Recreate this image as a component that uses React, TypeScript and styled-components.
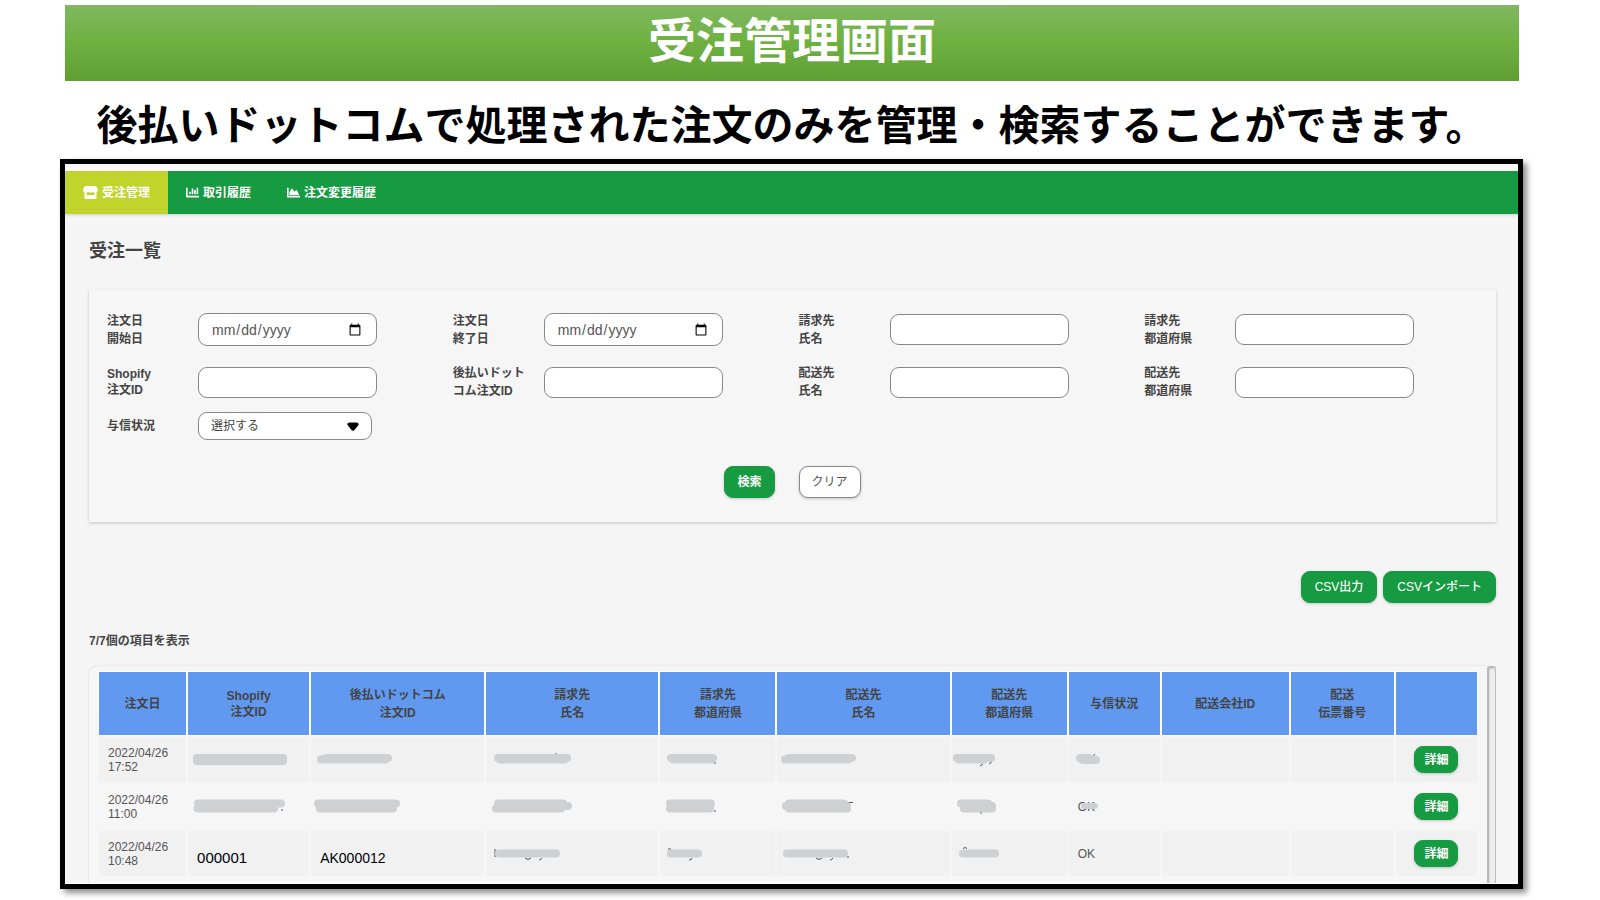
import React from 'react';
import styled, { createGlobalStyle } from 'styled-components';
import { FaChartBar, FaChartArea } from 'react-icons/fa';

const GlobalStyle = createGlobalStyle`
  *, *::before, *::after { box-sizing: border-box; }
  body {
    margin: 0;
    background: #fff;
    color: #444;
    font: 12px/18px "Liberation Sans", "Noto Sans CJK JP", sans-serif;
  }
  button, input, select { font: inherit; color: inherit; }
`;

const Page = styled.div`
  padding: 5px 77px 10px 60px;
`;

const Banner = styled.h1`
  margin: 0 4px 0 5px;
  height: 76px;
  padding-bottom: 2px;
  display: flex;
  align-items: center;
  justify-content: center;
  background: linear-gradient(#81b861 0%, #6fb242 45%, #5f9f33 100%);
  color: #fff;
  font-size: 48px;
  line-height: 72px;
  font-weight: 700;
`;

const Lead = styled.p`
  margin: 0;
  padding: 15px 0 3px;
  text-align: center;
  white-space: nowrap;
  color: #000;
  font-size: 41px;
  line-height: 60px;
  font-weight: 700;
`;

const Frame = styled.main`
  border: 5px solid #000;
  background: #f5f5f5;
  box-shadow: 4px 4px 6px rgba(0, 0, 0, 0.45);
`;

const Nav = styled.nav`
  display: flex;
  height: 50px;
  border-top: 7px solid #faf8f9;
  background: #179b42;
  box-shadow: 0 1px 3px rgba(0, 0, 0, 0.15);
`;

const Tab = styled.a<{ $active?: boolean }>`
  display: flex;
  align-items: center;
  gap: 4px;
  padding: 0 18px;
  color: #fff;
  font-weight: 700;
  text-decoration: none;
  background: ${(p) => (p.$active ? '#c1d42c' : 'transparent')};
`;

const Content = styled.div`
  padding: 0 22px 0 24px;
  border-bottom: 1px solid #fff;
`;

const Heading = styled.h2`
  margin: 0;
  padding: 25px 0 26px;
  font-size: 18px;
  line-height: 25px;
  font-weight: 700;
`;

const SearchCard = styled.form`
  padding: 13px 6px 24px 18px;
  background: #f6f6f6;
  box-shadow: 0 1px 3px rgba(0, 0, 0, 0.2);
`;

const Fields = styled.div`
  display: grid;
  grid-template-columns: repeat(4, 1fr);
  grid-template-rows: 53px 52px 36px;
`;

const Field = styled.div`
  display: flex;
  align-items: center;
`;

const Label = styled.label<{ $tight?: boolean }>`
  flex: 0 0 91px;
  font-weight: 700;
  line-height: ${(p) => (p.$tight ? 16 : 18)}px;
  white-space: pre-line;
`;

const TextInput = styled.input`
  width: 179px;
  height: 31px;
  padding: 0 12px;
  border: 1px solid #888;
  border-radius: 9px;
  background: #fff;
  font-size: 14px;
`;

const DateInput = styled(TextInput)`
  height: 33px;
  color: #555;
`;

const SelectBox = styled.div`
  position: relative;
  width: 174px;

  svg {
    position: absolute;
    top: 10px;
    right: 13px;
    pointer-events: none;
  }
`;

const Select = styled.select`
  display: block;
  width: 100%;
  height: 28px;
  padding: 0 12px;
  border: 1px solid #888;
  border-radius: 9px;
  background: #fff;
  appearance: none;
`;

const Actions = styled.div`
  display: flex;
  justify-content: center;
  gap: 24px;
  padding: 22px 12px 0 0;
`;

const Button = styled.button<{ $plain?: boolean; $small?: boolean }>`
  height: ${(p) => (p.$small ? 27 : 32)}px;
  padding: 0 ${(p) => (p.$small ? 9 : 12)}px;
  border: 1px solid ${(p) => (p.$plain ? '#888' : '#179b42')};
  border-radius: 9px;
  background: ${(p) => (p.$plain ? '#fff' : '#179b42')};
  color: ${(p) => (p.$plain ? '#555' : '#fff')};
  font-weight: ${(p) => (p.$plain ? 400 : 700)};
  box-shadow: 0 1px 3px rgba(0, 0, 0, 0.2);
  white-space: nowrap;
`;

const ExportButton = styled(Button)`
  padding: 0 13px;
  font-weight: 500;
`;

const Exports = styled.div`
  display: flex;
  justify-content: flex-end;
  gap: 6px;
  padding-top: 49px;
`;

const Count = styled.p`
  margin: 0;
  padding: 29px 0 16px;
  font-weight: 700;
`;

const TableArea = styled.div`
  display: flex;
`;

const TablePanel = styled.div`
  flex: 1;
  min-width: 0;
  padding: 4px 8px 5px;
  border-radius: 9px 0 0 0;
  background: #f6f6f6;
  box-shadow: 0 0 2px rgba(0, 0, 0, 0.18);
  clip-path: inset(-3px 0 0 -3px);
`;

const ScrollTrack = styled.div`
  flex: 0 0 9px;
  border: 1px solid #bbb;
  border-bottom: 0;
  border-radius: 3px 3px 0 0;
  background: #eee;
  box-shadow: inset 1px 1px 2px rgba(0, 0, 0, 0.3);
`;

const Table = styled.table`
  width: 100%;
  table-layout: fixed;
  border-collapse: separate;
  border-spacing: 2px;
`;

const HeadCell = styled.th<{ $tight?: boolean }>`
  height: 63px;
  padding: 0;
  background: #6099ef;
  box-shadow: 0 0 0 1px #fff;
  font-weight: 700;
  line-height: ${(p) => (p.$tight ? 16 : 18)}px;
  white-space: pre-line;
`;

const Row = styled.tr`
  &:nth-child(odd) td { background: #f1f1f1; }
`;

const Cell = styled.td<{ $button?: boolean }>`
  position: relative;
  height: 45px;
  padding: 0 9px;
  line-height: 14px;
  color: #555;
  white-space: pre-line;
  text-align: ${(p) => (p.$button ? 'center' : 'left')};
`;

const Entry = styled.span<{ $size: number }>`
  display: block;
  padding-top: 8px;
  color: #000;
  font-size: ${(p) => p.$size}px;
`;

const MaskSvg = styled.svg`
  position: absolute;
  left: 0;
  top: 10px;
  overflow: visible;
`;

type MaskShape = { bars: string; marks?: string; thick?: number };

const Mask = ({ bars, marks, thick = 8 }: MaskShape) => (
  <MaskSvg width="100" height="24" fill="none" aria-hidden="true">
    {marks && <path d={marks} stroke="#555" strokeWidth="1" />}
    <path d={bars} stroke="#cfd0d2" strokeWidth={thick} strokeLinecap="round" />
  </MaskSvg>
);

const StoreIcon = () => (
  <svg width="15" height="13" viewBox="0 0 15 13" fill="#fff" aria-hidden="true">
    <path d="M2.500 0H12.500Q13 0 13.300 0.500L14.700 3Q15.400 5.400 13.500 6V12Q13.500 13 12.500 13H2.500Q1.500 13 1.500 12V6Q-0.400 5.400 0.300 3L1.700 0.500Q2 0 2.500 0ZM3.500 6.600V9H11.500V6.600Q10.300 6.500 9.800 5.900Q7.500 7.200 5.200 5.900Q4.700 6.500 3.500 6.600Z" fillRule="evenodd" />
  </svg>
);

const columns: { label: string; width: number; tight?: boolean }[] = [
  { label: '注文日', width: 87 },
  { label: 'Shopify\n注文ID', width: 121, tight: true },
  { label: '後払いドットコム\n注文ID', width: 173 },
  { label: '請求先\n氏名', width: 172 },
  { label: '請求先\n都道府県', width: 115 },
  { label: '配送先\n氏名', width: 172 },
  { label: '配送先\n都道府県', width: 115 },
  { label: '与信状況', width: 91 },
  { label: '配送会社ID', width: 127 },
  { label: '配送\n伝票番号', width: 103 },
  { label: '', width: 81 },
];

type CellData = { text?: string; entry?: number; mask?: MaskShape };

const rows: { date: string; cells: CellData[] }[] = [
  {
    date: '2022/04/26\n17:52',
    cells: [
      { mask: { bars: 'M9 11H95M9 14H95' } },
      { mask: { bars: 'M15 11H77M10 12.5H74', marks: 'M74 16L78 13' } },
      { mask: { bars: 'M12 11H81M14 12.5H78', marks: 'M70 6V8' } },
      { mask: { bars: 'M11 11H53M13 12.5H52', marks: 'M54 16H56' } },
      { mask: { bars: 'M12 11H75M8 12.5H71' } },
      { mask: { bars: 'M5 11H39M7 12.5H32', marks: 'M28 19L31 17M37 17Q40 16 40 13' } },
      { mask: { bars: 'M11 11H20M13 12.5H26M14 13H27', marks: 'M22 11L26 7' } },
    ],
  },
  {
    date: '2022/04/26\n11:00',
    cells: [
      { mask: { bars: 'M10 9.5H93M9.5 14.5H86', marks: 'M93 16H95' } },
      { mask: { bars: 'M7 9.5H85M9 14.5H82' } },
      { mask: { bars: 'M12 9.5H77M40 12H82M10 14.5H75' } },
      { mask: { bars: 'M10 9.5H51M10 14.5H50', marks: 'M54 17H56' } },
      { mask: { bars: 'M12 9.5H67M9 12H70M12 14.5H70', marks: 'M70 8.500H76' } },
      { mask: { bars: 'M9 9.5H36M12 12H40M12 14.5H40', marks: 'M29 18V20' } },
      { text: 'OK', mask: { bars: 'M15 12H26', thick: 6 } },
    ],
  },
  {
    date: '2022/04/26\n10:48',
    cells: [
      { text: '000001', entry: 15 },
      { text: 'AK000012', entry: 14 },
      { mask: { bars: 'M13 12.5H70', marks: 'M9 8V16M39 17Q42 20 45 17M53 19Q55 19 56 17' } },
      { mask: { bars: 'M11 12.5H38', marks: 'M29 19Q32 19 32 17M8 8H11' } },
      { mask: { bars: 'M10 12.5H67', marks: 'M39 17Q42 20 45 17M53 19Q55 19 56 17M70 16H72' } },
      { mask: { bars: 'M11 12.5H43', marks: 'M11 7.500Q13 5.500 15 7.500' } },
      { text: 'OK' },
    ],
  },
];

type FieldData = { id: string; label: string; date?: boolean; tight?: boolean };

const fields: FieldData[] = [
  { id: 'from', label: '注文日\n開始日', date: true },
  { id: 'to', label: '注文日\n終了日', date: true },
  { id: 'bill-name', label: '請求先\n氏名' },
  { id: 'bill-pref', label: '請求先\n都道府県' },
  { id: 'shopify-id', label: 'Shopify\n注文ID', tight: true },
  { id: 'atobarai-id', label: '後払いドット\nコム注文ID' },
  { id: 'ship-name', label: '配送先\n氏名' },
  { id: 'ship-pref', label: '配送先\n都道府県' },
];

export default function App() {
  return (
    <>
      <GlobalStyle />
      <Page lang="ja">
        <Banner>受注管理画面</Banner>
        <Lead>後払いドットコムで処理された注文のみを管理・検索することができます。</Lead>
        <Frame>
          <Nav>
            <Tab href="#orders" $active>
              <StoreIcon />
              受注管理
            </Tab>
            <Tab href="#transactions">
              <FaChartBar size={13} />
              取引履歴
            </Tab>
            <Tab href="#changes">
              <FaChartArea size={13} />
              注文変更履歴
            </Tab>
          </Nav>
          <Content>
            <Heading>受注一覧</Heading>
            <SearchCard onSubmit={(e: React.FormEvent) => e.preventDefault()}>
              <Fields>
                {fields.map((f) => (
                  <Field key={f.id}>
                    <Label htmlFor={f.id} $tight={f.tight}>{f.label}</Label>
                    {f.date ? <DateInput id={f.id} type="date" /> : <TextInput id={f.id} type="text" />}
                  </Field>
                ))}
                <Field>
                  <Label htmlFor="credit">与信状況</Label>
                  <SelectBox>
                    <Select id="credit">
                      <option>選択する</option>
                    </Select>
                    <svg width="12" height="9" aria-hidden="true">
                      <path d="M2.500 0.500H9.500Q12 0.500 11.500 3L7.500 8Q6 9.500 4.500 8L0.500 3Q0 0.500 2.500 0.500Z" fill="#000" />
                    </svg>
                  </SelectBox>
                </Field>
              </Fields>
              <Actions>
                <Button type="submit">検索</Button>
                <Button type="reset" $plain>クリア</Button>
              </Actions>
            </SearchCard>
            <Exports>
              <ExportButton type="button">CSV出力</ExportButton>
              <ExportButton type="button">CSVインポート</ExportButton>
            </Exports>
            <Count>7/7個の項目を表示</Count>
            <TableArea>
              <TablePanel>
                <Table>
                  <colgroup>
                    {columns.map((c, i) => <col key={i} width={c.width} />)}
                  </colgroup>
                  <thead>
                    <tr>
                      {columns.map((c, i) => (
                        <HeadCell key={i} scope="col" $tight={c.tight}>{c.label}</HeadCell>
                      ))}
                    </tr>
                  </thead>
                  <tbody>
                    {rows.map((r) => (
                      <Row key={r.date}>
                        <Cell>{r.date}</Cell>
                        {r.cells.map((c, i) => (
                          <Cell key={i}>
                            {c.entry ? <Entry $size={c.entry}>{c.text}</Entry> : c.text}
                            {c.mask && <Mask {...c.mask} />}
                          </Cell>
                        ))}
                        <Cell />
                        <Cell />
                        <Cell $button>
                          <Button type="button" $small>詳細</Button>
                        </Cell>
                      </Row>
                    ))}
                  </tbody>
                </Table>
              </TablePanel>
              <ScrollTrack />
            </TableArea>
          </Content>
        </Frame>
      </Page>
    </>
  );
}
